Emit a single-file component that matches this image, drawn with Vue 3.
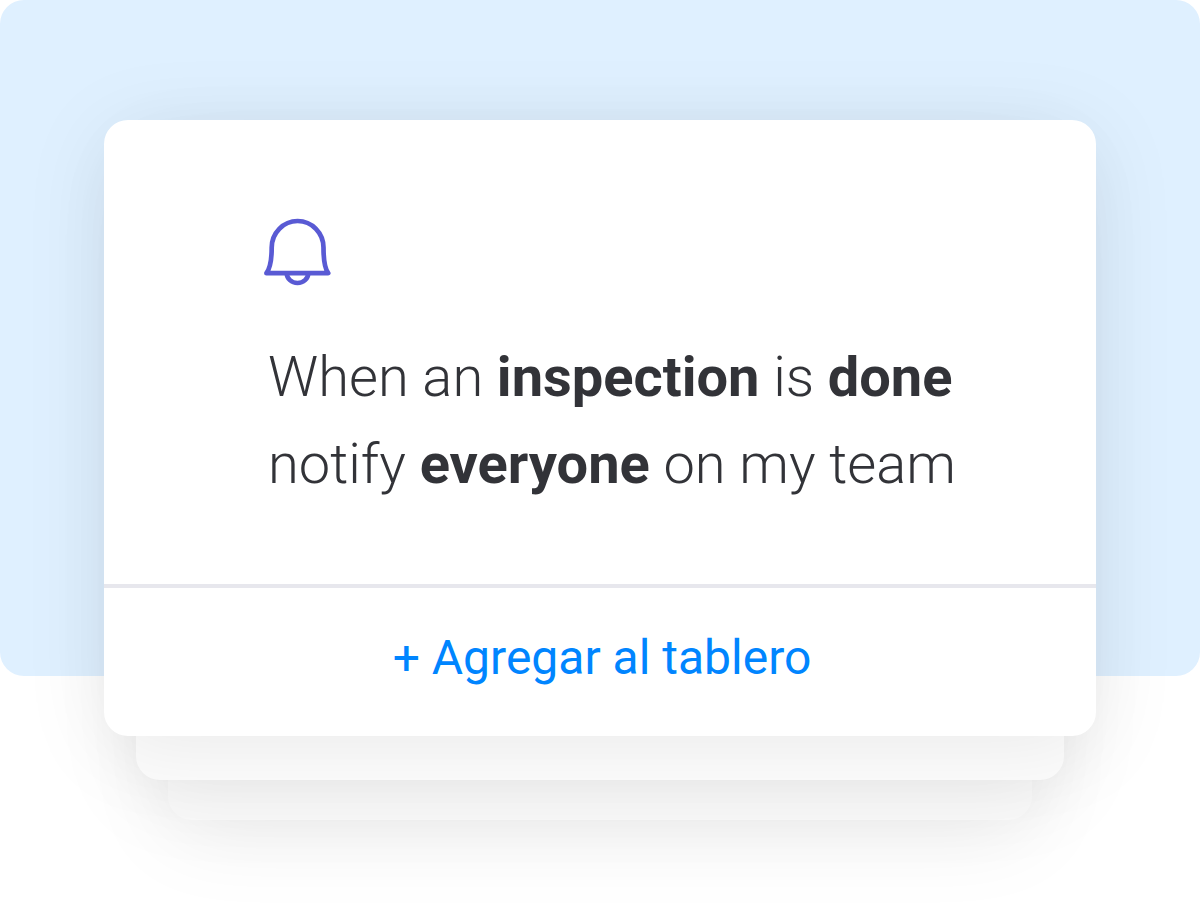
<script setup>
const lines = [
  [
    { text: 'When an ' },
    { text: 'inspection', strong: true },
    { text: ' is ' },
    { text: 'done', strong: true },
  ],
  [
    { text: 'notify ' },
    { text: 'everyone', strong: true },
    { text: ' on my team' },
  ],
]
</script>

<template>
  <main class="stage">
    <div class="backdrop"></div>
    <div class="stack">
      <div class="layer layer-back"></div>
      <div class="layer layer-middle"></div>
      <article class="card">
        <div class="content">
          <svg class="bell" viewBox="0 0 68 68" aria-hidden="true">
            <path d="M2.4 55.2C6 50.5 7.7 42 7.7 29.6A25.9 26.6 0 0 1 59.5 29.6C59.5 42 60.8 50.5 64.2 55.2Z" />
            <path d="M22.8 55.2A10.7 9.8 0 0 0 44.2 55.2" />
          </svg>
          <p class="rule">
            <span v-for="(line, i) in lines" :key="i" class="line">
              <component :is="part.strong ? 'strong' : 'span'" v-for="(part, j) in line" :key="j">{{ part.text }}</component>
            </span>
          </p>
        </div>
        <button class="add" type="button">+ Agregar al tablero</button>
      </article>
    </div>
  </main>
</template>

<style>
body {
  margin: 0;
  background: #fff;
}
</style>

<style scoped>
.stage {
  position: relative;
  box-sizing: border-box;
  min-height: 100vh;
  padding: 120px 104px 184px;
  overflow: hidden;
  font-family: Roboto, "Liberation Sans", sans-serif;
}

.backdrop {
  position: absolute;
  inset: 0 0 244px;
  border-radius: 24px;
  background: #dff0ff;
}

.stack {
  position: relative;
}

.layer,
.card {
  border-radius: 24px;
  background: #fff;
  box-shadow: 0 12px 88px rgba(0, 0, 0, 0.08);
}

.layer {
  position: absolute;
}

.layer-middle {
  inset: 24px 32px -44px;
  background: #fdfdfd;
}

.layer-back {
  inset: 48px 64px -84px;
  background: #fbfbfb;
}

.card {
  position: relative;
}

.content {
  padding: 98px 100px 76px 160px;
}

.bell {
  display: block;
  width: 68px;
  height: 68px;
  margin: 0 0 48px;
  fill: none;
  stroke: #595ad4;
  stroke-width: 4.7;
  stroke-linejoin: round;
}

.rule {
  margin: 0;
  padding-left: 4px;
  color: #323338;
  font-size: 56px;
  font-weight: 300;
  line-height: 87px;
}

.line {
  display: block;
}

.rule strong {
  font-weight: 700;
}

.add {
  display: block;
  width: 100%;
  padding: 42px 24px 50px 28px;
  border: 0;
  border-top: 4px solid #e7e7ed;
  border-radius: 0;
  background: transparent;
  color: #0085ff;
  font-family: inherit;
  font-size: 48px;
  line-height: 56px;
  text-align: center;
  cursor: pointer;
}
</style>
